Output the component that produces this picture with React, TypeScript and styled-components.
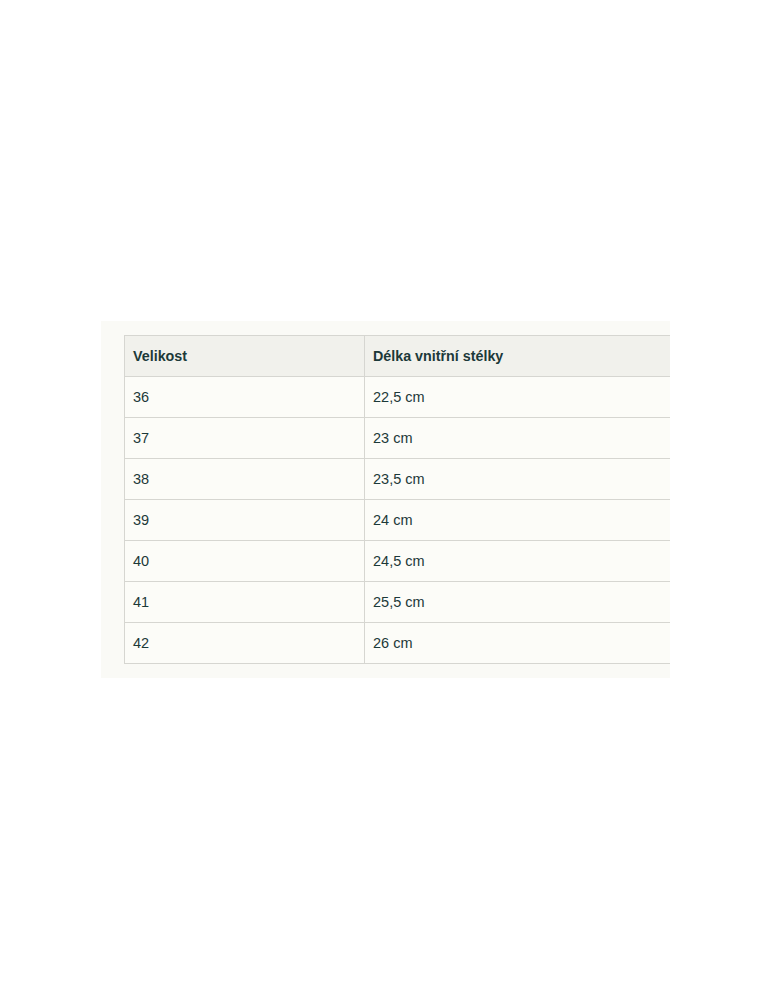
import styled, { createGlobalStyle } from 'styled-components';

const sizes = [
  { size: '36', length: '22,5 cm' },
  { size: '37', length: '23 cm' },
  { size: '38', length: '23,5 cm' },
  { size: '39', length: '24 cm' },
  { size: '40', length: '24,5 cm' },
  { size: '41', length: '25,5 cm' },
  { size: '42', length: '26 cm' },
];

const GlobalStyle = createGlobalStyle`
  html, body {
    margin: 0;
    padding: 0;
    background: #ffffff;
  }
  body {
    font-family: "Liberation Sans", Arial, sans-serif;
  }
`;

const Page = styled.div`
  padding: 321px 0 0 101px;
`;

const Panel = styled.div`
  width: 546px;
  padding: 14px 0 14px 23px;
  background: #fafaf6;
  overflow: hidden;
`;

const Table = styled.table`
  width: 620px;
  border-collapse: collapse;
  font-size: 14.5px;
  color: #1c3939;
  background: #fcfcf8;
`;

const HeadCell = styled.th`
  height: 40px;
  padding: 0 8px;
  text-align: left;
  font-size: 14.3px;
  font-weight: 700;
  background: #f1f1ec;
  border: 1px solid #d6d6d1;
`;

const Cell = styled.td<{ $first?: boolean }>`
  height: 40px;
  padding: 0 8px;
  width: ${(p) => (p.$first ? '223px' : 'auto')};
  border: 1px solid #d6d6d1;
`;

const App = () => {
  return (
    <>
      <GlobalStyle />
      <Page>
        <Panel>
          <Table>
            <thead>
              <tr>
                <HeadCell>Velikost</HeadCell>
                <HeadCell>Délka vnitřní stélky</HeadCell>
              </tr>
            </thead>
            <tbody>
              {sizes.map((row) => (
                <tr key={row.size}>
                  <Cell $first>{row.size}</Cell>
                  <Cell>{row.length}</Cell>
                </tr>
              ))}
            </tbody>
          </Table>
        </Panel>
      </Page>
    </>
  );
};

export default App;
